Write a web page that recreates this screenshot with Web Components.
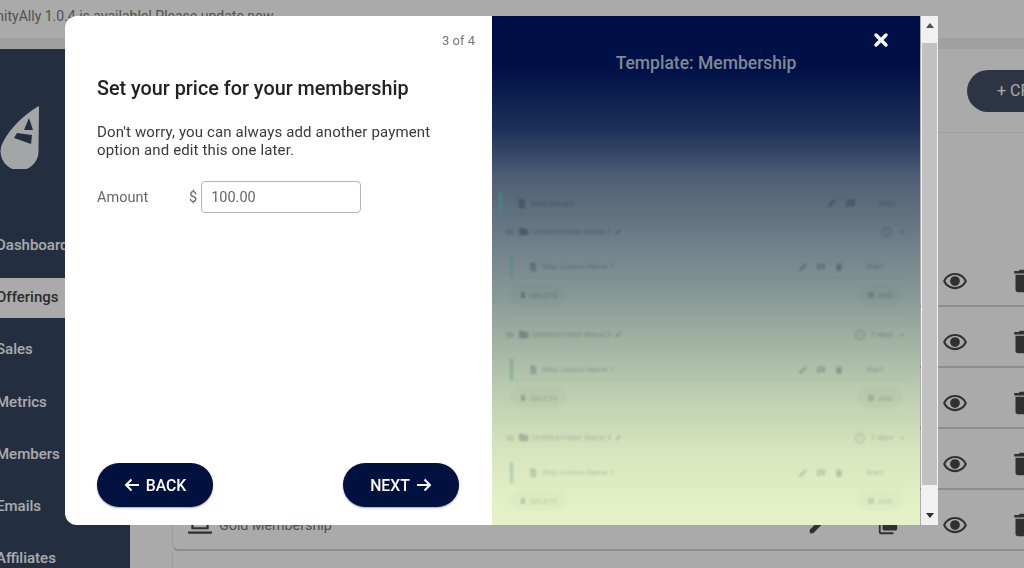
<!DOCTYPE html>
<html>
<head>
<meta charset="utf-8">
<title>CommunityAlly</title>
<style>
	html, body { margin: 0; height: 100%; overflow: hidden; background: #fff; font-family: Roboto, "Liberation Sans", sans-serif; }
</style>
</head>
<body>
<app-shell>
	<side-nav slot="nav"></side-nav>
	<offer-row slot="rows"></offer-row>
	<offer-row slot="rows"></offer-row>
	<offer-row slot="rows"></offer-row>
	<offer-row slot="rows"></offer-row>
	<offer-row slot="rows" name="Gold Membership"></offer-row>
	<offer-row slot="rows"></offer-row>
</app-shell>
<wizard-modal>
	<price-step slot="left"></price-step>
	<template-preview slot="right"></template-preview>
</wizard-modal>

<script>
const ICONS = {
	eye: '<path d="M12 4.500C7 4.500 2.700 7.600 1 12c1.700 4.400 6 7.500 11 7.500s9.300-3.100 11-7.500c-1.700-4.400-6-7.500-11-7.500zm0 13c-4 0-7.300-2.300-8.900-5.500C4.700 8.800 8 6.500 12 6.500s7.300 2.300 8.900 5.500c-1.600 3.200-4.900 5.500-8.900 5.500zM12 7.500a4.500 4.500 0 1 0 0 9 4.500 4.500 0 0 0 0-9z"/>',
	trash: '<path d="M6 19c0 1.100.9 2 2 2h8c1.100 0 2-.9 2-2V7H6v12zM19 4h-3.500l-1-1h-5l-1 1H5v2h14V4z"/>',
	pencil: '<path d="M3 17.250V21h3.750L17.800 9.940l-3.750-3.750L3 17.250zM20.700 7.040a1 1 0 0 0 0-1.410l-2.340-2.340a1 1 0 0 0-1.410 0l-1.830 1.830 3.750 3.750 1.830-1.830z"/>',
	copy: '<path d="M4 6H2v14c0 1.100.9 2 2 2h14v-2H4V6zm16-4H8c-1.100 0-2 .9-2 2v12c0 1.100.9 2 2 2h12c1.100 0 2-.9 2-2V4c0-1.100-.9-2-2-2z"/>',
	laptop: '<path d="M4 6h16v10H4zM6 8v6h12V8zM1 18h22v2H1z" fill-rule="evenodd"/>',
	doc: '<path d="M6 2h8l5 5v15H6zM8 10v1.500h8V10zm0 4v1.500h8V14zm0 4v1h6v-1z" fill-rule="evenodd"/>',
	folder: '<path d="M10 4H4a2 2 0 0 0-2 2v12c0 1.100.9 2 2 2h16c1.100 0 2-.9 2-2V8a2 2 0 0 0-2-2h-8l-2-2z"/>',
	handle: '<path d="M3 6h18v2H3zM3 11h18v2H3zM3 16h18v2H3z"/>',
	clock: '<path d="M12 2a10 10 0 1 0 0 20 10 10 0 0 0 0-20zm0 18a8 8 0 1 1 0-16 8 8 0 0 1 0 16zm.500-13H11v6l5.200 3.100.8-1.200-4.500-2.700V7z"/>',
	comment: '<path d="M3 4h18v13H8l-5 4zM6 8v2h12V8zm0 3.500v2h9v-2z" fill-rule="evenodd"/>',
	plus: '<path d="M12 3a9 9 0 1 0 0 18 9 9 0 0 0 0-18zm0 5a4 4 0 1 1 0 8 4 4 0 0 1 0-8z" fill-rule="evenodd"/>',
	chevron: '<path d="M7 10l5 5 5-5z"/>'
};

function icon(name, size, color) {
	return `<svg width="${size}" height="${size}" viewBox="0 0 24 24" fill="${color || 'currentColor'}">${ICONS[name]}</svg>`;
}

class AppShell extends HTMLElement {
	constructor() {
		super();
		this.attachShadow({ mode: 'open' }).innerHTML = `
			<style>
				:host { display: flex; flex-direction: column; height: 568px; margin-left: -38px; width: 1076px; overflow: hidden; }
				.banner { height: 38px; flex: none; text-indent: -15px; background: #fff; color: #7a7a7a; font-size: 14px; line-height: 33px; white-space: nowrap; }
				.strip { height: 11px; flex: none; background: #f0f0f0; }
				.body { flex: 1; display: flex; min-height: 0; }
				.main { flex: 1; min-width: 0; padding: 21px 0 0 42px; background: #fff; }
				.actions { display: flex; justify-content: flex-end; height: 42px; margin-bottom: 20px; }
				.create { width: 71px; height: 42px; box-sizing: border-box; padding-left: 30px; border-radius: 21px 0 0 21px; background: #445068; color: #fff; font-size: 16px; line-height: 42px; overflow: hidden; white-space: nowrap; }
				.rule { height: 1px; background: #efefef; margin-bottom: 115px; }
			</style>
			<div class="banner">CommunityAlly 1.0.4 is available! Please update now.</div>
			<div class="strip"></div>
			<div class="body">
				<slot name="nav"></slot>
				<div class="main">
					<div class="actions"><div class="create">+ CREATE</div></div>
					<div class="rule"></div>
					<slot name="rows"></slot>
				</div>
			</div>`;
	}
}

class SideNav extends HTMLElement {
	constructor() {
		super();
		const items = ['Dashboard', 'Offerings', 'Sales', 'Metrics', 'Members', 'Emails', 'Affiliates'];
		this.attachShadow({ mode: 'open' }).innerHTML = `
			<style>
				:host { display: block; flex: none; width: 168px; box-sizing: border-box; background: #354662; color: #fff; font-size: 15px; font-weight: 500; }
				svg { display: block; margin: 56px 0 57px 37px; }
				div { height: 40px; margin-bottom: 12.2px; padding-left: 34px; line-height: 39px; }
				.active { background: #fff; color: #444; }
			</style>
			<svg width="42" height="64" viewBox="0 0 42 64">
				<path d="M39 1.500C39.500 1 40 1.500 40 2.500L39.500 46A19 19 0 1 1 4 37C12 22 25 10 39 1.500Z" fill="#f6f8fa"/>
				<path d="M30 13L25 25L34 25Z" fill="#354662"/>
				<path d="M18 28L33 30L32 39L15 33Z" fill="#354662"/>
			</svg>
			${items.map((a, i) => `<div class="${i === 1 ? 'active' : ''}">${a}</div>`).join('')}`;
	}
}

class OfferRow extends HTMLElement {
	constructor() {
		super();
		this.attachShadow({ mode: 'open' });
	}

	connectedCallback() {
		const name = this.getAttribute('name') || 'Silver Membership';
		this.shadowRoot.innerHTML = `
			<style>
				:host { display: flex; align-items: center; height: 59px; margin-bottom: 2px; padding: 8px 0 0 14px; box-sizing: border-box; border-radius: 0 0 0 6px; background: #fff; border-bottom: 2px solid #d4d4d4; border-left: 1px solid #eee; color: #484848; font-size: 14.300px; }
				.name { flex: 1; margin-left: 6px; color: #777; }
				.icons { display: flex; align-items: center; }
				.icons span { display: flex; }
				.edit { margin-right: 48px; }
				.copy { margin-right: 43px; }
				.view { margin-right: 40px; }
			</style>
			${icon('laptop', 26)}
			<span class="name">${name}</span>
			<div class="icons">
				<span class="edit">${icon('pencil', 22)}</span>
				<span class="copy">${icon('copy', 22)}</span>
				<span class="view">${icon('eye', 26)}</span>
				<span class="trash">${icon('trash', 30)}</span>
			</div>`;
	}
}

class WizardModal extends HTMLElement {
	constructor() {
		super();
		this.attachShadow({ mode: 'open' }).innerHTML = `
			<style>
				:host { display: block; position: fixed; inset: 0; background: rgba(0, 0, 0, .335); }
				.dialog { position: absolute; left: 65px; top: 16px; width: 873px; height: 509px; display: flex; }
				.left { width: 427px; flex: none; background: #fff; border-radius: 12px 0 0 12px; overflow: hidden; }
				.right { width: 428px; flex: none; position: relative; overflow: hidden; }
				.close { position: absolute; left: 808px; top: 16px; width: 16px; height: 16px; z-index: 1; }
				.bar { width: 17px; margin-left: 1px; flex: none; display: flex; flex-direction: column; background: #f1f1f1; }
				.arrow { height: 27px; display: flex; justify-content: center; padding-top: 7px; box-sizing: border-box; }
				.arrow.down { height: 40px; padding-top: 28px; background: #f1f1f1; }
				.thumb { flex: 1; margin: 0 1px; background: #c1c1c1; }
				.tri { width: 0; height: 0; border-left: 4px solid transparent; border-right: 4px solid transparent; border-bottom: 5px solid #505050; }
				.down .tri { border-bottom: 0; border-top: 5px solid #303030; }
			</style>
			<div class="dialog">
				<div class="left"><slot name="left"></slot></div>
				<div class="right"><slot name="right"></slot></div>
				<svg class="close" viewBox="0 0 16 16"><path d="M3 3L13 13M13 3L3 13" stroke="#fff" stroke-width="3.400" stroke-linecap="round"/></svg>
				<div class="bar">
					<div class="arrow"><div class="tri"></div></div>
					<div class="thumb"></div>
					<div class="arrow down"><div class="tri"></div></div>
				</div>
			</div>`;
	}
}

class NavButton extends HTMLElement {
	constructor() {
		super();
		this.attachShadow({ mode: 'open' }).innerHTML = `
			<style>
				:host { display: inline-flex; align-items: center; justify-content: center; gap: 6px; height: 44px; width: 116px; border-radius: 22px; background: #00113f; color: #fff; font-size: 15.800px; font-weight: 500; box-shadow: 0 1px 2px rgba(0, 0, 0, .35); }
			</style>
			<slot></slot>`;
	}
}

class PriceStep extends HTMLElement {
	constructor() {
		super();
		const left = '<svg width="16" height="16" viewBox="0 0 16 16" fill="none" stroke="#fff" stroke-width="2"><path d="M15 8H2M7.500 2.500L2 8l5.500 5.500"/></svg>';
		const right = '<svg width="16" height="16" viewBox="0 0 16 16" fill="none" stroke="#fff" stroke-width="2"><path d="M1 8h13M8.500 2.500L14 8l-5.500 5.500"/></svg>';
		this.attachShadow({ mode: 'open' }).innerHTML = `
			<style>
				:host { display: flex; flex-direction: column; height: 509px; box-sizing: border-box; padding: 17px 17px 18px 32px; color: #333; }
				.count { align-self: flex-end; color: #777; font-size: 13px; line-height: 15px; }
				h2 { margin: 28px 0 0; color: #222; font-size: 19.800px; font-weight: 500; line-height: 26px; }
				p { margin: 21px 0 0; font-size: 15px; line-height: 18px; color: #3a3a3a; letter-spacing: .13px; width: 350px; }
				.amount { display: flex; align-items: center; margin-top: 22px; color: #666; font-size: 14.500px; }
				.label { width: 92px; padding-top: 1px; }
				.input { width: 160px; height: 32px; box-sizing: border-box; margin-left: 4px; padding-left: 9px; border: 1px solid #b5b5b5; border-radius: 4px; color: #666; line-height: 32px; }
				.foot { margin-top: auto; display: flex; justify-content: space-between; padding-right: 16px; }
			</style>
			<div class="count">3 of 4</div>
			<h2>Set your price for your membership</h2>
			<p>Don't worry, you can always add another payment option and edit this one later.</p>
			<div class="amount"><span class="label">Amount</span><span>$</span><div class="input">100.00</div></div>
			<div class="foot">
				<nav-button>${left}BACK</nav-button>
				<nav-button>NEXT${right}</nav-button>
			</div>`;
	}
}

class TemplatePreview extends HTMLElement {
	constructor() {
		super();
		this.attachShadow({ mode: 'open' }).innerHTML = `
			<style>
				:host { display: block; height: 509px; box-sizing: border-box; padding-top: 37px; background: linear-gradient(#001047 0, #001047 10%, #1c2f58 22%, #4f6077 32%, #8a9c98 56%, #b7c8ae 72%, #d6e4bd 85%, #e4f1c7 96%); }
				h3 { margin: 0; text-align: center; color: #7f8994; font-size: 17.500px; font-weight: 500; line-height: 21px; }
				.sheet { margin-top: 118px; padding: 0 13px 0 7px; color: rgba(20, 40, 50, .36); font-size: 7.800px; filter: blur(.9px); -webkit-mask-image: linear-gradient(#000, rgba(0, 0, 0, .55)); mask-image: linear-gradient(#000, rgba(0, 0, 0, .55)); }
				.step, .group, .item, .btns { display: flex; align-items: center; }
				.step { height: 22px; border-left: 3px solid rgba(70, 140, 140, .6); padding-left: 14px; margin-bottom: 7px; gap: 4px; box-shadow: 0 1px 0 rgba(20, 40, 50, .08); }
				.group { height: 21px; padding-left: 6px; gap: 3px; }
				.group .end { gap: 4px; }
				.item { height: 21px; margin: 14px 0 8px 11px; border-left: 3px solid rgba(70, 140, 140, .5); padding-left: 15px; gap: 4px; box-shadow: 0 1px 0 rgba(20, 40, 50, .07); }
				.btns { height: 20px; margin-left: 11px; padding: 0 5px 0 0; justify-content: space-between; }
				.pill { display: flex; align-items: center; gap: 3px; height: 20px; padding: 0 9px; border-radius: 10px; background: rgba(20, 40, 50, .04); }
				.end { margin-left: auto; display: flex; align-items: center; gap: 8px; }
				.sep { height: 1px; margin: 9px 0 9px 10px; background: rgba(20, 40, 50, .07); }
				.start { margin: 0 12px 0 14px; }
				.item .start { margin-right: 24px; }
			</style>
			<h3>Template: Membership</h3>
			<div class="sheet">
				<div class="step">${icon('doc', 11)}<span>Step Groups</span><span class="end">${icon('pencil', 10)}${icon('comment', 11)}<span class="start">Start</span></span></div>
				${['', '7 days', '7 days'].map((days, i) => `
				<div class="group">${icon('handle', 10)}${icon('folder', 11)}<span>Untitled Folder Name ${i + 1}</span>${icon('pencil', 7)}<span class="end">${icon('clock', 12)}${days ? `<span>${days}</span>` : ''}${icon('chevron', 10)}</span></div>
				<div class="item">${icon('doc', 10)}<span>Step Lesson Name 1</span><span class="end">${icon('pencil', 10)}${icon('comment', 10)}${icon('trash', 10)}<span class="start">Start</span></span></div>
				<div class="btns"><span class="pill">${icon('trash', 8)}DELETE</span><span class="pill">${icon('plus', 8)}ADD</span></div>
				${i < 2 ? '<div class="sep"></div>' : ''}`).join('')}
			</div>`;
	}
}

customElements.define('app-shell', AppShell);
customElements.define('side-nav', SideNav);
customElements.define('offer-row', OfferRow);
customElements.define('wizard-modal', WizardModal);
customElements.define('nav-button', NavButton);
customElements.define('price-step', PriceStep);
customElements.define('template-preview', TemplatePreview);
</script>
</body>
</html>
